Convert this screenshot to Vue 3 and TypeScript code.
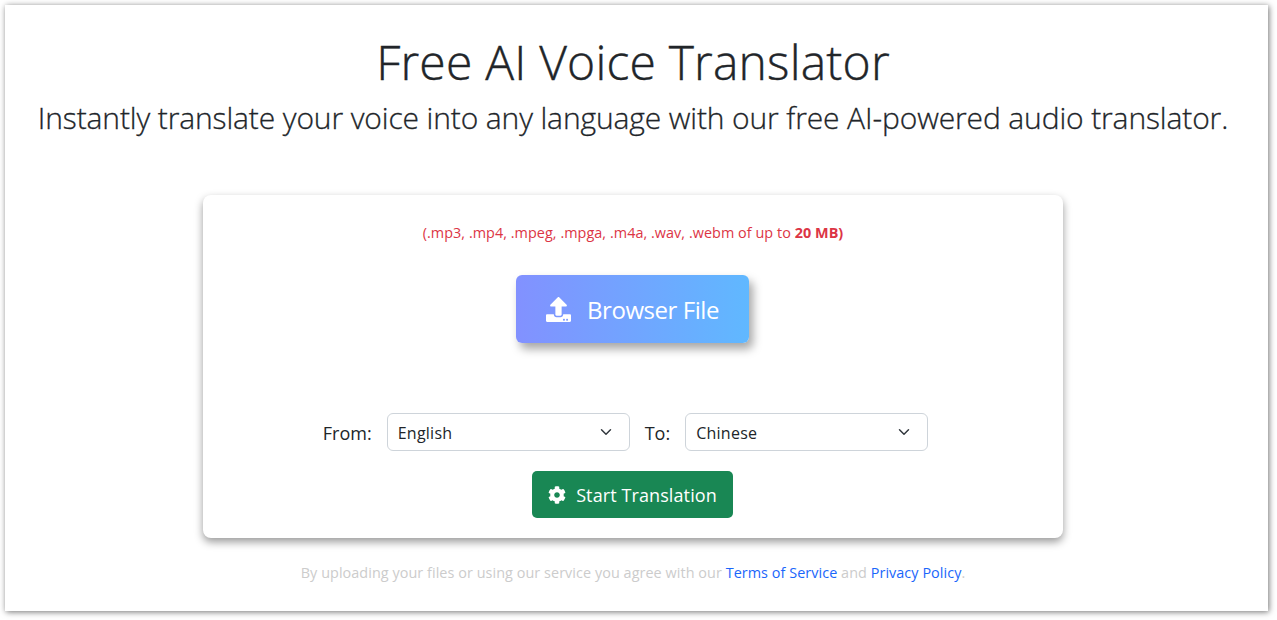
<script setup lang="ts">
import { ref } from 'vue'

const languages = ['English', 'Chinese', 'Spanish', 'French', 'German', 'Japanese']
const from = ref('English')
const to = ref('Chinese')
</script>

<template>
  <div class="page">
    <main class="panel">
      <h1 class="title">Free AI Voice Translator</h1>
      <p class="subtitle">Instantly translate your voice into any language with our free AI-powered audio translator.</p>

      <section class="card">
        <p class="formats">(.mp3, .mp4, .mpeg, .mpga, .m4a, .wav, .webm of up to <strong>20 MB)</strong></p>

        <button class="upload" type="button">
          <svg class="upload__icon" viewBox="0 0 512 512" aria-hidden="true">
            <path
              fill="currentColor"
              d="M296 384h-80c-13.3 0-24-10.7-24-24V192h-87.7c-17.8 0-26.7-21.5-14.1-34.1L242.3 5.7c7.5-7.5 19.8-7.5 27.3 0l152.2 152.2c12.6 12.6 3.7 34.1-14.1 34.1H320v168c0 13.3-10.7 24-24 24zm216-8v112c0 13.3-10.7 24-24 24H24c-13.3 0-24-10.7-24-24V376c0-13.3 10.7-24 24-24h136v8c0 30.9 25.1 56 56 56h80c30.9 0 56-25.1 56-56v-8h136c13.3 0 24 10.7 24 24zm-124 88c0-11-9-20-20-20s-20 9-20 20 9 20 20 20 20-9 20-20zm64 0c0-11-9-20-20-20s-20 9-20 20 9 20 20 20 20-9 20-20z"
            />
          </svg>
          <span>Browser File</span>
        </button>

        <div class="langs">
          <label class="langs__label" for="from">From:</label>
          <select id="from" v-model="from" class="langs__select">
            <option v-for="lang in languages" :key="lang">{{ lang }}</option>
          </select>
          <label class="langs__label" for="to">To:</label>
          <select id="to" v-model="to" class="langs__select">
            <option v-for="lang in languages" :key="lang">{{ lang }}</option>
          </select>
        </div>

        <button class="start" type="button">
          <svg class="start__icon" viewBox="0 0 512 512" aria-hidden="true">
            <path
              fill="currentColor"
              d="M487.4 315.7l-42.6-24.6c4.3-23.2 4.3-47 0-70.2l42.6-24.6c4.9-2.8 7.1-8.6 5.5-14-11.1-35.6-30-67.8-54.7-94.6-3.8-4.1-10-5.1-14.8-2.3L380.8 110c-17.9-15.4-38.5-27.3-60.8-35.1V25.8c0-5.6-3.9-10.5-9.4-11.7-36.7-8.2-74.3-7.8-109.2 0-5.5 1.2-9.4 6.1-9.4 11.7V75c-22.2 7.9-42.8 19.8-60.8 35.1L88.7 85.5c-4.9-2.8-11-1.9-14.8 2.3-24.7 26.7-43.6 58.9-54.7 94.6-1.7 5.4.6 11.2 5.5 14L67.3 221c-4.3 23.2-4.3 47 0 70.2l-42.6 24.6c-4.9 2.8-7.1 8.6-5.5 14 11.1 35.6 30 67.8 54.7 94.6 3.8 4.1 10 5.1 14.8 2.3l42.6-24.6c17.9 15.4 38.5 27.3 60.8 35.1v49.2c0 5.6 3.9 10.5 9.4 11.7 36.7 8.2 74.3 7.8 109.2 0 5.5-1.2 9.4-6.1 9.4-11.7v-49.2c22.2-7.9 42.8-19.8 60.8-35.1l42.6 24.6c4.9 2.8 11 1.9 14.8-2.3 24.7-26.7 43.6-58.9 54.7-94.6 1.5-5.5-.7-11.3-5.6-14.1zM256 336c-44.1 0-80-35.9-80-80s35.9-80 80-80 80 35.9 80 80-35.9 80-80 80z"
            />
          </svg>
          <span>Start Translation</span>
        </button>
      </section>

      <p class="terms">
        By uploading your files or using our service you agree with our
        <a href="#">Terms of Service</a> and <a href="#">Privacy Policy</a>.
      </p>
    </main>
  </div>
</template>

<style>
html,
body {
  background: #fff;
}
</style>

<style scoped>
.page {
  box-sizing: border-box;
  width: 1277px;
  height: 620px;
  padding: 5px 9px 9px 5px;
  font-family: 'Open Sans', 'Noto Sans', sans-serif;
  color: #212529;
}

.panel {
  box-sizing: border-box;
  height: 100%;
  padding-right: 7px;
  background: #fff;
  box-shadow: 1px 1px 6px rgba(0, 0, 0, 0.55);
  display: flex;
  flex-direction: column;
  align-items: center;
  overflow: hidden;
}

.title {
  margin: 24px 0 0;
  font-size: 48px;
  font-weight: 300;
  line-height: 66px;
  letter-spacing: 0.2px;
  -webkit-text-stroke: 0.4px #212529;
}

.subtitle {
  margin: 0;
  font-size: 30px;
  font-weight: 300;
  line-height: 45px;
  letter-spacing: -0.13px;
  white-space: nowrap;
  -webkit-text-stroke: 0.3px #212529;
}

.card {
  box-sizing: border-box;
  width: 860px;
  height: 343px;
  margin-top: 55px;
  padding-top: 27px;
  background: #fff;
  border-radius: 8px;
  box-shadow: 0 4px 8px rgba(0, 0, 0, 0.4);
  display: flex;
  flex-direction: column;
  align-items: center;
}

.formats {
  margin: 0;
  font-size: 14.4px;
  line-height: 21px;
  letter-spacing: 0.05px;
  color: #dc3545;
}

.upload {
  width: 233px;
  height: 68px;
  margin: 32px 1px 0 0;
  border: 0;
  border-radius: 6px;
  background: linear-gradient(90deg, #8291ff, #60b8ff);
  box-shadow: 4px 6px 10px rgba(0, 0, 0, 0.35);
  color: #fff;
  font: inherit;
  font-size: 24px;
  letter-spacing: -0.45px;
  display: flex;
  align-items: center;
  justify-content: center;
  gap: 16px;
}

.upload__icon {
  width: 25px;
  height: 25px;
}

.langs {
  margin-top: 70px;
  display: flex;
  align-items: center;
}

.langs__label {
  padding-top: 2px;
  font-size: 18px;
}

.langs__select {
  box-sizing: border-box;
  width: 243px;
  height: 38px;
  margin: 0 15px;
  padding: 2px 36px 0 10px;
  border: 1px solid #ced4da;
  border-radius: 6px;
  background-color: #fff;
  background-image: url("data:image/svg+xml,%3csvg xmlns='http://www.w3.org/2000/svg' viewBox='0 0 16 16'%3e%3cpath fill='none' stroke='%23343a40' stroke-linecap='round' stroke-linejoin='round' stroke-width='2' d='m2 5 6 6 6-6'/%3e%3c/svg%3e");
  background-repeat: no-repeat;
  background-position: right 15px center;
  background-size: 16px 12px;
  appearance: none;
  color: #212529;
  font: inherit;
  font-size: 16px;
  letter-spacing: 0.25px;
}

.start {
  width: 201px;
  height: 47px;
  margin: 20px 1px 0 0;
  border: 0;
  border-radius: 5px;
  background: #198754;
  color: #fff;
  font: inherit;
  font-size: 18px;
  letter-spacing: 0.1px;
  display: flex;
  align-items: center;
  justify-content: center;
  gap: 10px;
}

.start__icon {
  width: 18px;
  height: 18px;
}

.terms {
  margin: 24px 0 0;
  font-size: 14.4px;
  line-height: 21px;
  color: #ccc;
  letter-spacing: 0.06px;
}

.terms a {
  color: #1a66fb;
  text-decoration: none;
}
</style>
